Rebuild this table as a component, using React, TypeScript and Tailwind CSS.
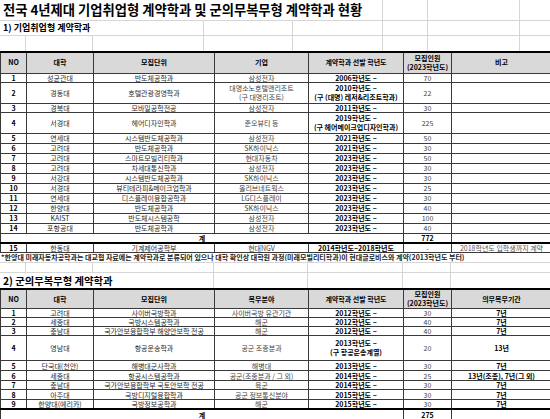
import React from 'react';

type Row = {
  no: string;
  univ: string;
  unit: React.ReactNode;
  corp: React.ReactNode;
  year: React.ReactNode;
  count: string;
  last?: React.ReactNode;
  h: string;
};

const contractRows: Row[] = [
  { no: '1', univ: '성균관대', unit: '반도체공학과', corp: '삼성전자', year: '2006학년도 ~', count: '70', h: 'h-[8px]' },
  {
    no: '2',
    univ: '경동대',
    unit: '호텔관광경영학과',
    corp: (
      <>
        대명소노호텔앤리조트
        <br />
        (구 대명리조트)
      </>
    ),
    year: (
      <>
        2010학년도 ~
        <br />
        (구 (대명) 레저&amp;리조트학과)
      </>
    ),
    count: '22',
    h: 'h-[21px]',
  },
  { no: '3', univ: '경북대', unit: '모바일공학전공', corp: '삼성전자', year: '2011학년도 ~', count: '30', h: 'h-[8px]' },
  {
    no: '4',
    univ: '서경대',
    unit: '헤어디자인학과',
    corp: '준오뷰티 등',
    year: (
      <>
        2019학년도 ~
        <br />
        (구 헤어메이크업디자인학과)
      </>
    ),
    count: '225',
    h: 'h-[21px]',
  },
  { no: '5', univ: '연세대', unit: '시스템반도체공학과', corp: '삼성전자', year: '2021학년도 ~', count: '50', h: 'h-[10px]' },
  { no: '6', univ: '고려대', unit: '반도체공학과', corp: 'SK하이닉스', year: '2021학년도 ~', count: '30', h: 'h-[10px]' },
  { no: '7', univ: '고려대', unit: '스마트모빌리티학과', corp: '현대자동차', year: '2023학년도 ~', count: '50', h: 'h-[10px]' },
  { no: '8', univ: '고려대', unit: '차세대통신학과', corp: '삼성전자', year: '2023학년도 ~', count: '30', h: 'h-[10px]' },
  { no: '9', univ: '서강대', unit: '시스템반도체공학과', corp: 'SK하이닉스', year: '2023학년도 ~', count: '30', h: 'h-[10px]' },
  { no: '10', univ: '서경대', unit: '뷰티테라피&메이크업학과', corp: '올리브네트웍스', year: '2023학년도 ~', count: '25', h: 'h-[10px]' },
  { no: '11', univ: '연세대', unit: '디스플레이융합공학과', corp: 'LG디스플레이', year: '2023학년도 ~', count: '30', h: 'h-[10px]' },
  { no: '12', univ: '한양대', unit: '반도체공학과', corp: 'SK하이닉스', year: '2023학년도 ~', count: '40', h: 'h-[10px]' },
  { no: '13', univ: 'KAIST', unit: '반도체시스템공학', corp: '삼성전자', year: '2023학년도 ~', count: '100', h: 'h-[10px]' },
  { no: '14', univ: '포항공대', unit: '반도체공학과', corp: '삼성전자', year: '2023학년도 ~', count: '40', h: 'h-[10px]' },
];

const militaryRows: Row[] = [
  { no: '1', univ: '고려대', unit: '사이버국방학과', corp: '사이버국방 유관기관', year: '2012학년도 ~', count: '30', last: '7년', h: 'h-[9px]' },
  { no: '2', univ: '세종대', unit: '국방시스템공학과', corp: '해군', year: '2012학년도 ~', count: '40', last: '7년', h: 'h-[9px]' },
  { no: '3', univ: '충남대', unit: '국가안보융합학부 해양안보학 전공', corp: '해군', year: '2012학년도 ~', count: '40', last: '7년', h: 'h-[9px]' },
  {
    no: '4',
    univ: '영남대',
    unit: '항공운송학과',
    corp: '공군 조종분과',
    year: (
      <>
        2013학년도 ~
        <br />
        (구 항공운송계열)
      </>
    ),
    count: '20',
    last: '13년',
    h: 'h-[25px]',
  },
  { no: '5', univ: '단국대(천안)', unit: '해병대군사학과', corp: '해병대', year: '2013학년도 ~', count: '30', last: '7년', h: 'h-[10px]' },
  { no: '6', univ: '세종대', unit: '항공시스템공학과', corp: '공군(조종분과 / 그 외)', year: '2014학년도 ~', count: '25', last: '13년(조종), 7년(그 외)', h: 'h-[10px]' },
  { no: '7', univ: '충남대', unit: '국가안보융합학부 국토안보학 전공', corp: '육군', year: '2014학년도 ~', count: '30', last: '7년', h: 'h-[9px]' },
  { no: '8', univ: '아주대', unit: '국방디지털융합학과', corp: '공군 정보통신분야', year: '2015학년도 ~', count: '30', last: '7년', h: 'h-[10px]' },
  { no: '9', univ: '한양대(에리카)', unit: '국방정보공학과', corp: '해군', year: '2015학년도 ~', count: '30', last: '7년', h: 'h-[9px]' },
];

const td = 'border border-[#3a3a3a] p-0 text-center align-middle leading-[8px] whitespace-nowrap overflow-hidden';
const th = 'border border-[#3a3a3a] border-t-2 border-t-black bg-[#d9d9d9] p-0 text-center align-middle leading-[9px] font-bold text-black';

function Cols() {
  return (
    <colgroup>
      <col className="w-[26px]" />
      <col className="w-[67px]" />
      <col className="w-[121px]" />
      <col className="w-[94px]" />
      <col className="w-[95px]" />
      <col className="w-[48px]" />
      <col className="w-[100px]" />
    </colgroup>
  );
}

function DataRow({ row, boldLast }: { row: Row; boldLast?: boolean }) {
  return (
    <tr className={row.h}>
      <td className={`${td} font-bold text-black`}>{row.no}</td>
      <td className={td}>{row.univ}</td>
      <td className={td}>{row.unit}</td>
      <td className={`${td} text-[#444] [&:has(br)]:leading-[9px]`}>{row.corp}</td>
      <td className={`${td} font-bold text-black [&:has(br)]:leading-[9px]`}>{row.year}</td>
      <td className={`${td} text-[#444]`}>{row.count}</td>
      <td className={`${td} ${boldLast ? 'font-bold text-black' : 'text-[#555]'}`}>{row.last}</td>
    </tr>
  );
}

export default function App() {
  return (
    <div className="w-[550px] h-[419px] overflow-hidden bg-white text-[7px] text-[#2a2a2a] font-['Noto_Sans_CJK_KR','Noto_Sans',sans-serif]">
      {/* sheet title rows */}
      <div className="grid h-[20px] grid-cols-[383px_45px_92px_30px]">
        <div className="flex items-center border-b border-r border-[#d6d6d6] pl-[3px] text-[13.3px] font-bold text-black whitespace-nowrap">
          전국 4년제대 기업취업형 계약학과 및 군의무복무형 계약학과 현황
        </div>
        <div className="border-b border-r border-[#d6d6d6]" />
        <div className="border-b border-r border-[#d6d6d6]" />
        <div className="border-b border-[#d6d6d6]" />
      </div>
      <div className="grid h-[16px] grid-cols-[204px_89px_90px_45px_92px_30px]">
        <div className="flex items-center border-b border-r border-[#d6d6d6] pl-[3px] text-[9px] font-bold text-black whitespace-nowrap">
          1) 기업취업형 계약학과
        </div>
        <div className="border-b border-r border-[#d6d6d6]" />
        <div className="border-b border-r border-[#d6d6d6]" />
        <div className="border-b border-r border-[#d6d6d6]" />
        <div className="border-b border-r border-[#d6d6d6]" />
        <div className="border-b border-[#d6d6d6]" />
      </div>
      <div className="grid h-[15px] grid-cols-[26px_67px_111px_89px_90px_45px_92px_30px]">
        <div className="border-r border-[#d6d6d6]" />
        <div className="border-r border-[#d6d6d6]" />
        <div className="border-r border-[#d6d6d6]" />
        <div className="border-r border-[#d6d6d6]" />
        <div className="border-r border-[#d6d6d6]" />
        <div className="border-r border-[#d6d6d6]" />
        <div className="border-r border-[#d6d6d6]" />
        <div />
      </div>

      {/* table 1 */}
      <table className="w-[551px] table-fixed border-collapse">
        <Cols />
        <tbody>
          <tr className="h-[21px]">
            <th className={th}>NO</th>
            <th className={th}>대학</th>
            <th className={th}>모집단위</th>
            <th className={th}>기업</th>
            <th className={th}>계약학과 선발 학년도</th>
            <th className={th}>
              모집인원
              <br />
              (2023학년도)
            </th>
            <th className={th}>비고</th>
          </tr>
          {contractRows.map((r) => (
            <DataRow key={r.no} row={r} />
          ))}
          <tr className="h-[10px]">
            <td colSpan={5} className={`${td} border-b-2 border-b-black font-bold text-black`}>
              계
            </td>
            <td className={`${td} border-b-2 border-b-black font-bold text-black`}>772</td>
            <td className={`${td} border-b-2 border-b-black`} />
          </tr>
          <DataRow
            row={{
              no: '15',
              univ: '한동대',
              unit: '기계제어공학부',
              corp: '현대NGV',
              year: '2014학년도~2018학년도',
              count: '-',
              last: '2018학년도 입학생까지 계약',
              h: 'h-[9px]',
            }}
          />
        </tbody>
      </table>

      {/* footnote + section 2 heading */}
      <div className="flex h-[10px] items-center border-b border-[#d6d6d6] pl-[1px] font-semibold whitespace-nowrap text-[#222]">
        *한양대 미래자동차공학과는 대교협 자료에는 계약학과로 분류되어 있으나 대학 확인상 대학원 과정(미래모빌리티학과)이 현대글로비스와 계약(2013학년도 부터)
      </div>
      <div className="grid h-[10px] grid-cols-[26px_67px_121px_94px_95px_48px_99px] border-b border-[#d6d6d6]">
        <div className="border-r border-[#d6d6d6]" />
        <div className="border-r border-[#d6d6d6]" />
        <div className="border-r border-[#d6d6d6]" />
        <div className="border-r border-[#d6d6d6]" />
        <div className="border-r border-[#d6d6d6]" />
        <div className="border-r border-[#d6d6d6]" />
        <div />
      </div>
      <div className="grid h-[15px] grid-cols-[214px_94px_95px_48px_99px]">
        <div className="flex items-center border-r border-[#d6d6d6] pl-[3px] text-[10.3px] font-bold text-black whitespace-nowrap">
          2) 군의무복무형 계약학과
        </div>
        <div className="border-r border-[#d6d6d6]" />
        <div className="border-r border-[#d6d6d6]" />
        <div className="border-r border-[#d6d6d6]" />
        <div />
      </div>

      {/* table 2 */}
      <table className="w-[551px] table-fixed border-collapse">
        <Cols />
        <tbody>
          <tr className="h-[18px]">
            <th className={th}>NO</th>
            <th className={th}>대학</th>
            <th className={th}>모집단위</th>
            <th className={th}>복무분야</th>
            <th className={th}>계약학과 선발 학년도</th>
            <th className={th}>
              모집인원
              <br />
              (2023학년도)
            </th>
            <th className={th}>의무복무기간</th>
          </tr>
          {militaryRows.map((r) => (
            <DataRow key={r.no} row={r} boldLast />
          ))}
          <tr className="h-[11px]">
            <td colSpan={5} className={`${td} border-t-2 border-t-black font-bold text-black`}>
              계
            </td>
            <td className={`${td} border-t-2 border-t-black font-bold text-black`}>275</td>
            <td className={`${td} border-t-2 border-t-black`} />
          </tr>
        </tbody>
      </table>
    </div>
  );
}
